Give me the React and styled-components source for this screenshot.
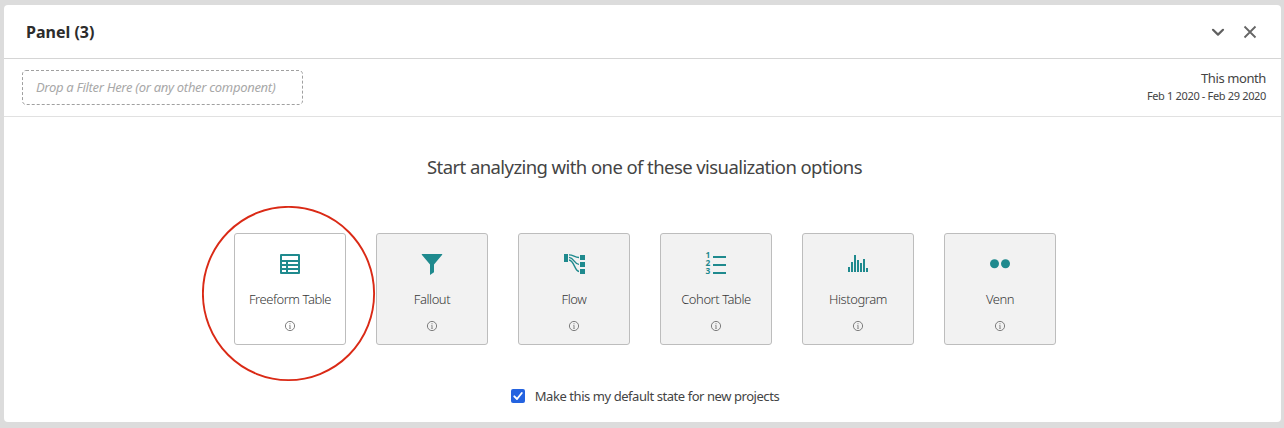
import React from "react";
import styled, { createGlobalStyle } from "styled-components";

const GlobalStyle = createGlobalStyle`
  * { box-sizing: border-box; }
  body {
    margin: 0;
    background: #dcdcdc;
    font-family: "Noto Sans", "Open Sans", sans-serif;
    color: #444;
  }
`;

const Page = styled.div`
  height: 428px;
  padding: 5px 3px 6px 4px;
`;

const Panel = styled.section`
  height: 417px;
  background: #fff;
  border-radius: 4px;
  display: flex;
  flex-direction: column;
`;

const Header = styled.header`
  height: 54px;
  flex: none;
  display: flex;
  align-items: center;
  justify-content: space-between;
  padding: 0 23px 0 22px;
  border-bottom: 1px solid #d5d5d5;
`;

const Title = styled.h1`
  margin: 0;
  font-size: 16px;
  line-height: 22px;
  font-weight: 700;
  color: #2c2c2c;
`;

const Actions = styled.div`
  display: flex;
  align-items: center;
  gap: 16px;
`;

const IconButton = styled.button`
  display: flex;
  padding: 0;
  border: 0;
  background: none;
`;

const FilterBar = styled.div`
  height: 58px;
  flex: none;
  display: flex;
  justify-content: space-between;
  padding: 11px 15px 0 18px;
  border-bottom: 1px solid #e1e1e1;
`;

const DropZone = styled.div`
  position: relative;
  width: 281px;
  height: 35px;
  display: flex;
  align-items: center;
  padding: 0 13px 1px 14px;
  font-size: 13px;
  letter-spacing: -0.3px;
  font-style: italic;
  color: #a8a8a8;
  white-space: nowrap;
`;

const DashOutline = styled.svg`
  position: absolute;
  inset: 0;
`;

const DateRange = styled.div`
  display: flex;
  flex-direction: column;
  align-items: flex-end;
  white-space: nowrap;
`;

const RangeName = styled.span`
  margin-top: -1px;
  font-size: 13px;
  line-height: 18px;
  letter-spacing: -0.4px;
`;

const RangeDates = styled.span`
  font-size: 11px;
  line-height: 18px;
  letter-spacing: -0.34px;
`;

const Body = styled.main`
  flex: 1;
  display: flex;
  flex-direction: column;
  align-items: center;
`;

const Heading = styled.h2`
  margin: 37px 0 0 4px;
  font-size: 18.5px;
  line-height: 26px;
  font-weight: 400;
  letter-spacing: -0.58px;
  white-space: nowrap;
`;

const Cards = styled.div`
  display: flex;
  gap: 30px;
  margin: 53px 0 0 5px;
`;

const Card = styled.div`
  position: relative;
  width: 112px;
  height: 112px;
  display: flex;
  flex-direction: column;
  align-items: center;
  padding-top: 17px;
  border: 1px solid #bdbdbd;
  border-radius: 3px;
  background: ${(p) => (p.$selected ? "#fff" : "#f2f2f2")};
`;

const CardLabel = styled.span`
  margin-top: 12px;
  font-size: 13px;
  line-height: 20px;
  font-weight: 300;
  letter-spacing: -0.45px;
  color: #383838;
  white-space: nowrap;
`;

const InfoIcon = styled.svg`
  margin-top: 11px;
`;

const Highlight = styled.svg`
  position: absolute;
  left: -33px;
  top: -28px;
  pointer-events: none;
`;

const DefaultOption = styled.label`
  display: flex;
  align-items: center;
  gap: 10px;
  margin: 41px 0 0 5px;
  font-size: 13px;
  line-height: 20px;
  letter-spacing: -0.44px;
  white-space: nowrap;
`;

const CheckBox = styled.span`
  display: flex;
  width: 14px;
  height: 14px;
  border-radius: 2px;
  background: #2463e0;
`;

const TableIcon = () => (
  <svg width="26" height="26" viewBox="0 0 26 26">
    <rect x="3" y="3" width="20" height="20" rx="1" fill="#1f8a8e" />
    <path fill="#fff" d="M5 5h16v4H5zM5 11h4v2H5zM11 11h10v2H11zM5 15h4v2H5zM11 15h10v2H11zM5 19h4v2H5zM11 19h10v2H11z" />
  </svg>
);

const FunnelIcon = () => (
  <svg width="26" height="26" viewBox="0 0 26 26">
    <path fill="#1f8a8e" d="M2.800 3h20.400v.8L15 13.600v7.600L11 24V13.600L2.800 3.800z" />
  </svg>
);

const FlowIcon = () => (
  <svg width="26" height="26" viewBox="0 0 26 26">
    <path fill="#1f8a8e" d="M3 3h4v8H3zM19 4h5v5h-5zM19 11h5v5h-5zM19 18h5v5h-5z" />
    <g fill="none" stroke="#1f8a8e" strokeWidth="1.400">
      <path d="M8 3.900c4.500 0 5.500 2.600 10 2.600" />
      <path d="M8 6.400c5 .3 5.500 7 10 7" />
      <path d="M8 9c5.300.5 5.500 11 10 11.500" />
    </g>
  </svg>
);

const ListDrawing = styled.svg`
  overflow: visible;
`;

const Numeral = styled.text`
  font-family: "Noto Sans", sans-serif;
  font-size: 8.4px;
  font-weight: 700;
  fill: #1f8a8e;
`;

const ListIcon = () => (
  <ListDrawing width="26" height="26" viewBox="0 0 26 26">
    <Numeral x="2.500" y="7">1</Numeral>
    <Numeral x="2.500" y="15">2</Numeral>
    <Numeral x="2.500" y="23">3</Numeral>
    <path fill="#1f8a8e" d="M10 5h13v2H10zM10 13h13v2H10zM10 21h13v2H10z" />
  </ListDrawing>
);

const HistogramIcon = () => (
  <svg width="26" height="26" viewBox="0 0 26 26">
    <path fill="#1f8a8e" d="M3 16h2v5H3zM6 11h2v10H6zM9 4h2v17H9zM12 9h2v12h-2zM15 12h2v9h-2zM18 8h2v13h-2zM21 17h2v4h-2z" />
  </svg>
);

const VennIcon = () => (
  <svg width="26" height="26" viewBox="0 0 26 26">
    <circle cx="7.500" cy="12.700" r="4.500" fill="#1f8a8e" />
    <circle cx="18.500" cy="12.700" r="4.500" fill="#1f8a8e" />
  </svg>
);

const options = [
  { label: "Freeform Table", Icon: TableIcon, selected: true },
  { label: "Fallout", Icon: FunnelIcon },
  { label: "Flow", Icon: FlowIcon },
  { label: "Cohort Table", Icon: ListIcon },
  { label: "Histogram", Icon: HistogramIcon },
  { label: "Venn", Icon: VennIcon },
];

export default function App() {
  return (
    <Page>
      <GlobalStyle />
      <Panel>
        <Header>
          <Title>Panel (3)</Title>
          <Actions>
            <IconButton aria-label="Collapse">
              <svg width="16" height="16" viewBox="0 0 16 16">
                <path d="M3 5.800 8 10.600l5-4.800" fill="none" stroke="#606060" strokeWidth="2.200" strokeLinecap="round" strokeLinejoin="round" />
              </svg>
            </IconButton>
            <IconButton aria-label="Close">
              <svg width="16" height="16" viewBox="0 0 16 16">
                <path d="M2.500 2.500l11 11M13.500 2.500l-11 11" fill="none" stroke="#666" strokeWidth="1.800" />
              </svg>
            </IconButton>
          </Actions>
        </Header>
        <FilterBar>
          <DropZone>
            <DashOutline width="281" height="35">
              <rect x=".5" y=".5" width="280" height="34" rx="3.500" fill="none" stroke="#a0a0a0" strokeDasharray="3 2" />
            </DashOutline>
            Drop a Filter Here (or any other component)
          </DropZone>
          <DateRange>
            <RangeName>This month</RangeName>
            <RangeDates>Feb 1 2020 - Feb 29 2020</RangeDates>
          </DateRange>
        </FilterBar>
        <Body>
          <Heading>Start analyzing with one of these visualization options</Heading>
          <Cards>
            {options.map(({ label, Icon, selected }) => (
              <Card key={label} $selected={selected}>
                <Icon />
                <CardLabel>{label}</CardLabel>
                <InfoIcon width="12" height="12" viewBox="0 0 12 12">
                  <circle cx="6" cy="6" r="4.600" fill="none" stroke="#707070" strokeWidth=".9" />
                  <path d="M5.500 3.200h1v1h-1zM5 5.200h1.500v3H7v.6H5v-.6h.5V5.800H5z" fill="#808080" />
                </InfoIcon>
                {selected && (
                  <Highlight width="174" height="176" viewBox="0 0 174 176">
                    <ellipse cx="86.500" cy="87.500" rx="85.600" ry="86.600" fill="none" stroke="#da2a16" strokeWidth="1.900" />
                  </Highlight>
                )}
              </Card>
            ))}
          </Cards>
          <DefaultOption>
            <CheckBox>
              <svg width="14" height="14" viewBox="0 0 14 14">
                <path d="M3.300 7.300 6 10l4.800-6" fill="none" stroke="#fff" strokeWidth="1.900" strokeLinecap="round" strokeLinejoin="round" />
              </svg>
            </CheckBox>
            Make this my default state for new projects
          </DefaultOption>
        </Body>
      </Panel>
    </Page>
  );
}
